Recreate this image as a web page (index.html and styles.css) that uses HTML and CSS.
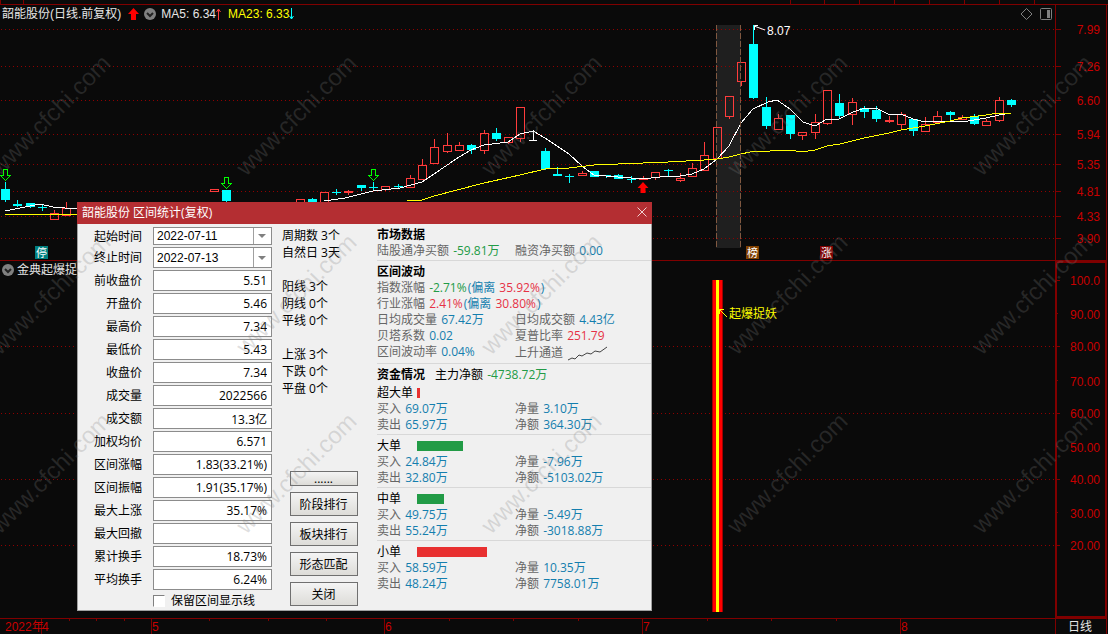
FILE: index.html
```html
<!DOCTYPE html>
<html lang="zh-CN">
<head>
  <meta charset="UTF-8">
  <meta name="viewport" content="width=device-width, initial-scale=1.0">
  <title>韶能股份 区间统计</title>
  <link rel="stylesheet" href="styles.css">
</head>
<body>
  <div class="terminal">
    <svg class="strip" aria-hidden="true">
      <path class="frame" d="M0 4.5H2000M.5 0V4M23.5 0V4M790.5 0V4M824.5 0V4M859.5 0V4M894.5 0V4M929.5 0V4M964.5 0V4M999.5 0V4M1034.5 0V4"/>
    </svg>

    <section class="pane price-pane">
      <div class="plot">
        <header class="pane-head">
          <span>韶能股份(日线.前复权)</span>
          <svg class="up-icon" width="11" height="12"><path d="M5.5 0L11 6H8V12H3V6H0Z"/></svg>
          <svg class="fold-icon" width="12" height="12"><circle cx="6" cy="6" r="6"/><path d="M3 5L6 8L9 5"/></svg>
          <span class="ma5">MA5: 6.34<svg class="trend" width="5" height="12"><path d="M2.5 12V1M.5 4L2.5 1L4.5 4"/></svg></span>
          <span class="ma23">MA23: 6.33<svg class="trend" width="5" height="12"><path d="M2.5 0V11M.5 8L2.5 11L4.5 8"/></svg></span>
          <svg class="tools" width="32" height="12">
            <path d="M5.500 .5L11 6L5.500 11.500L0 6Z"/>
            <rect x="19.500" y=".5" width="11" height="11" rx="1"/>
            <rect class="solid" x="26" y="2" width="3" height="8"/>
          </svg>
        </header>
        <svg class="chart" height="235">
          <g transform="translate(0 -25)">
            <rect class="range" x="716" y="25" width="25" height="223"/>
            <g class="grid">
              <line x1="1" x2="100%" y1="29.500" y2="29.500"/>
              <line x1="1" x2="100%" y1="66.500" y2="66.500"/>
              <line x1="1" x2="100%" y1="100.500" y2="100.500"/>
              <line x1="1" x2="100%" y1="134.500" y2="134.500"/>
              <line x1="1" x2="100%" y1="164.500" y2="164.500"/>
              <line x1="1" x2="100%" y1="191.500" y2="191.500"/>
              <line x1="1" x2="100%" y1="216.500" y2="216.500"/>
              <line x1="1" x2="100%" y1="238.500" y2="238.500"/>
            </g>
            <!-- falling days -->
            <path class="down-wick" d="M5.500 182V202M17.500 200V207M30.500 203V208M42.500 205V211M226.500 190V202M312.500 198V202M336.500 189V195M361.500 185V191M373.500 182V190M398.500 184V189M471.500 144V154M496.500 128V141M545.500 148V170M557.500 167V176M569.500 174V183M606.500 175V178M618.500 174V179M631.500 176V183M668.500 169V176M753.500 25V99M766.500 97V129M790.500 115V139M839.500 94V119M864.500 106V118M876.500 106V122M913.500 119V136M950.500 111V120M974.500 114V125M1011.500 99V107"/>
            <path class="down-body" d="M1 189h9v11h-9zM13 204h9v2h-9zM26 203h9v4h-9zM38 207h9v1h-9zM222 190h9v11h-9zM308 199h9v3h-9zM332 192h9v1h-9zM357 185h9v3h-9zM369 187h9v1h-9zM394 186h9v1h-9zM467 145h9v5h-9zM492 133h9v6h-9zM541 151h9v18h-9zM553 174h9v2h-9zM565 176h9v1h-9zM590 171h9v6h-9zM602 175h9v1h-9zM614 175h9v4h-9zM627 179h9v1h-9zM664 170h9v1h-9zM749 44h9v54h-9zM762 107h9v19h-9zM786 115h9v19h-9zM835 103h9v13h-9zM860 108h9v4h-9zM872 110h9v9h-9zM909 119h9v12h-9zM946 112h9v3h-9zM970 116h9v8h-9zM1007 100h9v5h-9z"/>
            <!-- rising days -->
            <path class="up" d="M50.500 213.500h8v6h-8zM54.500 210V213M62.500 208.500h8v7h-8zM66.500 202V208M210.500 189.500h8v2h-8zM296.500 199.500h8v6h-8zM320.500 192.500h8v10h-8zM344.500 191.500h8v1h-8zM348.500 190V195M381.500 186.500h8v3h-8zM385.500 190V191M406.500 178.500h8v9h-8zM410.500 175V178M418.500 165.500h8v14h-8zM422.500 159V165M430.500 147.500h8v16h-8zM434.500 139V147M443.500 145.500h8v6h-8zM447.500 133V145M447.500 152V153M455.500 145.500h8v5h-8zM459.500 142V145M480.500 133.500h8v17h-8zM484.500 130V133M484.500 151V154M504.500 137.500h8v5h-8zM508.500 143V144M516.500 107.500h8v31h-8zM520.500 139V142M578.500 173.500h8v2h-8zM582.500 171V173M639.500 178.500h8v1h-8zM643.500 176V178M651.500 172.500h8v5h-8zM655.500 178V180M676.500 178.500h8v2h-8zM680.500 173V178M680.500 181V182M688.500 168.500h8v8h-8zM692.500 163V168M700.500 155.500h8v15h-8zM704.500 142V155M713.500 127.500h8v31h-8zM725.500 96.500h8v20h-8zM729.500 117V119M737.500 62.500h8v19h-8zM741.500 82V86M774.500 118.500h8v11h-8zM778.500 114V118M798.500 132.500h8v3h-8zM802.500 136V140M811.500 122.500h8v10h-8zM815.500 114V122M815.500 133V139M823.500 90.500h8v33h-8zM827.500 124V125M848.500 102.500h8v12h-8zM852.500 98V102M852.500 115V125M885.500 120.500h8v1h-8zM889.500 116V123M897.500 114.500h8v10h-8zM901.500 112V114M901.500 125V129M921.500 124.500h8v7h-8zM925.500 117V124M933.500 116.500h8v6h-8zM937.500 111V116M958.500 117.500h8v2h-8zM962.500 115V117M982.500 121.500h8v4h-8zM986.500 119V121M995.500 100.500h8v20h-8zM999.500 97V100M999.500 121V122"/>
            <path class="flat" d="M533.500 130V140M529 140.500H537"/>
            <path class="ma-short" d="M5 211L20 208L40 204L53 207L77 209M324 201L345 198L361 194L373 191L400 188L422 182L434 174L459 157L471 150L484 145L508 142L520 134L533 131L545 138L569 154L582 166L594 175L618 177L643 179L668 176L680 176L692 174L704 169L717 159L729 146L741 123L753 109L768 102L777 100L790 109L803 122L815 126L827 119L839 119L853 112L865 108L876 108L888 114L901 114L913 119L925 122L938 121L962 122L986 118L999 115L1011 113"/>
            <path class="ma-long" d="M5 214L50 214L77 215M407 201L422 200L434 196L484 183L520 175L545 169L569 168L594 165L643 163L668 162L704 160L717 159L729 157L741 154L750 152L790 150L802 152L815 150L827 146L840 144L864 138L889 133L901 130L925 126L950 121L962 118L986 115L999 113L1011 114"/>
            <path class="range-edge" d="M716.500 25V248M740.500 25V248"/>
            <path class="sell" d="M3.500 169.500h4v6h3L5.500 180.500L.5 175.500h3z"/>
            <path class="sell" d="M224.500 177.500h4v6h3L226.500 188.500L221.500 183.500h3z"/>
            <path class="sell" d="M371.500 169.500h4v6h3L373.500 180.500L368.500 175.500h3z"/>
            <path class="buy" d="M643 182L648.500 188H645.500V193H640.500V188H637.500Z"/>
            <path class="flat" d="M765 30L754 26M754.500 30V25.500H758"/>
            <text class="peak" x="767" y="35">8.07</text>
            <rect class="tag-halt" x="35" y="246" width="13" height="13"/>
            <text class="tag" x="36" y="257">停</text>
            <rect class="tag-list" x="746" y="246" width="13" height="13"/>
            <text class="tag" x="747" y="257">榜</text>
            <rect class="tag-rise" x="820" y="246" width="13" height="13"/>
            <text class="tag" x="821" y="257">涨</text>
          </g>
        </svg>
      </div>
      <svg class="axis price-axis">
        <g transform="translate(0 -5)">
          <path class="frame" d="M0 29.500H5M0 66.500H5M0 100.500H5M0 134.500H5M0 164.500H5M0 191.500H5M0 216.500H5M0 238.500H5"/>
          <text x="44" y="34">7.99</text>
          <text x="44" y="71">7.26</text>
          <text x="44" y="105">6.60</text>
          <text x="44" y="139">5.94</text>
          <text x="44" y="169">5.35</text>
          <text x="44" y="196">4.81</text>
          <text x="44" y="221">4.33</text>
          <text x="44" y="243">3.90</text>
        </g>
      </svg>
    </section>

    <section class="pane signal-pane">
      <div class="plot">
        <header class="pane-head small">
          <svg class="fold-icon" width="12" height="12"><circle cx="6" cy="6" r="6"/><path d="M3 5L6 8L9 5"/></svg>
          <span>金典起爆捉妖</span>
        </header>
        <svg class="chart" height="340">
          <g transform="translate(0 -278)">
            <g class="grid">
              <line x1="1" x2="100%" y1="346.500" y2="346.500"/>
              <line x1="1" x2="100%" y1="413.500" y2="413.500"/>
              <line x1="1" x2="100%" y1="479.500" y2="479.500"/>
              <line x1="1" x2="100%" y1="545.500" y2="545.500"/>
            </g>
            <rect class="bar-edge" x="712" y="280" width="11" height="332"/>
            <rect class="bar-mid" x="713" y="280" width="9" height="332"/>
            <rect class="bar-core" x="716" y="280" width="3" height="332"/>
            <path class="pointer" d="M727 317L719.500 309.500M719.500 314V309.500H724"/>
            <text class="signal" x="729" y="318">起爆捉妖</text>
          </g>
        </svg>
      </div>
      <svg class="axis signal-axis">
        <g transform="translate(-2 -263)">
          <path class="frame" d="M0 280.500H5M0 313.500H3M0 346.500H5M0 380.500H3M0 413.500H5M0 446.500H3M0 479.500H5M0 512.500H3M0 545.500H5"/>
          <text x="45" y="285">100.0</text>
          <text x="45" y="319">90.00</text>
          <text x="45" y="351">80.00</text>
          <text x="45" y="386">70.00</text>
          <text x="45" y="418">60.00</text>
          <text x="45" y="452">50.00</text>
          <text x="45" y="484">40.00</text>
          <text x="45" y="518">30.00</text>
          <text x="45" y="550">20.00</text>
        </g>
      </svg>
    </section>

    <footer class="time-row">
      <svg class="timeline" height="15">
        <path class="frame" d="M41.500 0V15M69.500 0V2M96.500 0V2M124.500 0V2M151.500 0V15M209.500 0V2M268.500 0V2M326.500 0V2M384.500 0V15M449.500 0V2M513.500 0V2M578.500 0V2M642.500 0V15M707.500 0V2M771.500 0V2M836.500 0V2M900.500 0V15"/>
        <text x="5" y="12">2022年</text>
        <text x="42" y="12">4</text>
        <text x="152" y="12">5</text>
        <text x="385" y="12">6</text>
        <text x="643" y="12">7</text>
        <text x="901" y="12">8</text>
      </svg>
      <span class="period">日线</span>
    </footer>

    <section class="dialog" role="dialog" aria-labelledby="dialogTitle">
      <header class="dialog-head">
        <span id="dialogTitle">韶能股份 区间统计(复权)</span>
        <button class="close" type="button" aria-label="关闭窗口">
          <svg width="10" height="10"><path d="M.5 .5L9.500 9.500M9.500 .5L.5 9.500"/></svg>
        </button>
      </header>
      <div class="dialog-body">
        <form class="fields">
          <label for="start">起始时间</label>
          <div class="combo first"><select id="start"><option>2022-07-11</option></select></div>
          <label for="end">终止时间</label>
          <div class="combo"><select id="end"><option>2022-07-13</option></select></div>
          <label for="prev">前收盘价</label><input id="prev" type="text" value="5.51">
          <label for="open">开盘价</label><input id="open" type="text" value="5.46">
          <label for="high">最高价</label><input id="high" type="text" value="7.34">
          <label for="low">最低价</label><input id="low" type="text" value="5.43">
          <label for="last">收盘价</label><input id="last" type="text" value="7.34">
          <label for="volume">成交量</label><input id="volume" type="text" value="2022566">
          <label for="amount">成交额</label><input id="amount" type="text" value="13.3亿">
          <label for="average">加权均价</label><input id="average" type="text" value="6.571">
          <label for="change">区间涨幅</label><input id="change" type="text" value="1.83(33.21%)">
          <label for="swing">区间振幅</label><input id="swing" type="text" value="1.91(35.17%)">
          <label for="maxUp">最大上涨</label><input id="maxUp" type="text" value="35.17%">
          <label for="maxDown">最大回撤</label><input id="maxDown" type="text" value="">
          <label for="turnover">累计换手</label><input id="turnover" type="text" value="18.73%">
          <label for="avgTurnover">平均换手</label><input id="avgTurnover" type="text" value="6.24%">
          <label class="keep"><input type="checkbox">保留区间显示线</label>
        </form>

        <div class="middle">
          <p>周期数 3个<br>自然日 3天</p>
          <p>阳线 3个<br>阴线 0个<br>平线 0个</p>
          <p>上涨 3个<br>下跌 0个<br>平盘 0个</p>
          <div class="actions">
            <button class="short" type="button">......</button>
            <button type="button">阶段排行</button>
            <button type="button">板块排行</button>
            <button type="button">形态匹配</button>
            <button type="button">关闭</button>
          </div>
        </div>

        <div class="stats">
          <section>
            <h2>市场数据</h2>
            <div class="pair">
              <span>陆股通净买额 <b class="green">-59.81万</b></span>
              <span>融资净买额 <b>0.00</b></span>
            </div>
          </section>
          <section>
            <h2>区间波动</h2>
            <div>指数涨幅 <b class="green">-2.71%</b><b>(偏离 </b><b class="red">35.92%</b><b>)</b></div>
            <div>行业涨幅 <b class="red">2.41%</b><b>(偏离 </b><b class="red">30.80%</b><b>)</b></div>
            <div class="pair"><span>日均成交量 <b>67.42万</b></span><span>日均成交额 <b>4.43亿</b></span></div>
            <div class="pair"><span>贝塔系数 <b>0.02</b></span><span>夏普比率 <b class="red">251.79</b></span></div>
            <div class="pair channel">
              <span>区间波动率 <b>0.04%</b></span>
              <span class="trend-cell">上升通道
                <svg width="42" height="15"><path d="M1 14L5 12L8 13L12 9L15 10L20 7L24 8L28 5L33 6L40 1"/></svg>
              </span>
            </div>
          </section>
          <section>
            <div class="fund"><h2>资金情况</h2><span class="dark">主力净额 <b class="green">-4738.72万</b></span></div>
            <div class="order"><span>超大单</span><i class="bar buy-bar" style="width: 3px"></i></div>
            <div class="pair"><span>买入 <b>69.07万</b></span><span>净量 <b>3.10万</b></span></div>
            <div class="pair"><span>卖出 <b>65.97万</b></span><span>净额 <b>364.30万</b></span></div>
          </section>
          <section>
            <div class="order"><span>大单</span><i class="bar sell-bar" style="width: 46px"></i></div>
            <div class="pair"><span>买入 <b>24.84万</b></span><span>净量 <b>-7.96万</b></span></div>
            <div class="pair"><span>卖出 <b>32.80万</b></span><span>净额 <b>-5103.02万</b></span></div>
          </section>
          <section>
            <div class="order"><span>中单</span><i class="bar sell-bar" style="width: 27px"></i></div>
            <div class="pair"><span>买入 <b>49.75万</b></span><span>净量 <b>-5.49万</b></span></div>
            <div class="pair"><span>卖出 <b>55.24万</b></span><span>净额 <b>-3018.88万</b></span></div>
          </section>
          <section>
            <div class="order"><span>小单</span><i class="bar buy-bar" style="width: 70px"></i></div>
            <div class="pair"><span>买入 <b>58.59万</b></span><span>净量 <b>10.35万</b></span></div>
            <div class="pair"><span>卖出 <b>48.24万</b></span><span>净额 <b>7758.01万</b></span></div>
          </section>
        </div>
      </div>
    </section>

    <svg class="watermark" aria-hidden="true">
      <text transform="translate(0 177) rotate(-45)">www.cfchi.com</text>
      <text transform="translate(246 177) rotate(-45)">www.cfchi.com</text>
      <text transform="translate(491 177) rotate(-45)">www.cfchi.com</text>
      <text transform="translate(737 177) rotate(-45)">www.cfchi.com</text>
      <text transform="translate(982 177) rotate(-45)">www.cfchi.com</text>
      <text transform="translate(0 356) rotate(-45)">www.cfchi.com</text>
      <text transform="translate(246 356) rotate(-45)">www.cfchi.com</text>
      <text transform="translate(491 356) rotate(-45)">www.cfchi.com</text>
      <text transform="translate(737 356) rotate(-45)">www.cfchi.com</text>
      <text transform="translate(982 356) rotate(-45)">www.cfchi.com</text>
      <text transform="translate(0 535) rotate(-45)">www.cfchi.com</text>
      <text transform="translate(246 535) rotate(-45)">www.cfchi.com</text>
      <text transform="translate(491 535) rotate(-45)">www.cfchi.com</text>
      <text transform="translate(737 535) rotate(-45)">www.cfchi.com</text>
      <text transform="translate(982 535) rotate(-45)">www.cfchi.com</text>
    </svg>
  </div>
</body>
</html>
```
FILE: styles.css
```css
* {
  box-sizing: border-box;
}
body {
  margin: 0;
  background: #0a0a0a;
  font-family: "Liberation Sans", "Noto Sans CJK SC", sans-serif;
  font-size: 12px;
  color: #e6e6e6;
}
svg {
  display: block;
  flex: none;
}

/* chart terminal */
.terminal {
  position: relative;
  display: flex;
  flex-direction: column;
  min-height: 100vh;
  overflow: hidden;
}
.strip {
  width: 100%;
  height: 5px;
}
.frame {
  fill: none;
  stroke: #800000;
  shape-rendering: crispEdges;
}
.pane {
  display: grid;
  grid-template-columns: 1fr 52px;
  margin-right: 1px;
  border-bottom: 1px solid #800000;
}
.signal-pane {
  flex: 1;
}
.plot {
  min-width: 0;
}
.pane-head {
  display: flex;
  align-items: center;
  gap: 5px;
  height: 20px;
  padding: 0 2px 2px;
  line-height: 18px;
  white-space: nowrap;
}
.pane-head.small {
  height: 17px;
  padding-bottom: 0;
  gap: 3px;
}
.up-icon {
  margin-left: 2px;
  fill: #f00;
}
.fold-icon circle {
  fill: #808080;
}
.fold-icon path {
  fill: none;
  stroke: #222;
  stroke-width: 2;
}
.ma5,
.ma23 {
  display: flex;
  align-items: center;
}
.ma5 {
  margin-right: 2px;
}
.ma23 {
  color: #ff0;
}
.trend {
  fill: none;
}
.ma5 .trend {
  stroke: #ff3c3c;
}
.ma23 .trend {
  stroke: #0ff;
}
.tools {
  margin-left: auto;
  fill: none;
  stroke: #808080;
}
.tools .solid {
  fill: #808080;
  stroke: none;
}
.chart {
  width: 100%;
}
.grid line {
  stroke: #900000;
  stroke-dasharray: 1 3;
  shape-rendering: crispEdges;
}
.range {
  fill: #1f1f1f;
}
.range-edge {
  stroke: #805840;
  stroke-dasharray: 6 2;
}
.down-wick {
  stroke: #0ff;
}
.down-body {
  fill: #0ff;
}
.up {
  fill: none;
  stroke: #ff3c3c;
}
.flat,
.ma-short {
  fill: none;
  stroke: #fff;
}
.ma-long {
  fill: none;
  stroke: #ff0;
}
.ma-short,
.ma-long,
.down-wick,
.down-body,
.up,
.sell {
  shape-rendering: crispEdges;
}
.sell {
  fill: none;
  stroke: #0f0;
}
.buy {
  fill: #f00;
}
.peak,
.tag {
  fill: #fff;
}
.tag {
  font-size: 11px;
}
.tag-halt {
  fill: #008080;
}
.tag-list {
  fill: #804000;
}
.tag-rise {
  fill: #800000;
}
.axis {
  width: 52px;
  height: 100%;
  border-left: 1px solid #800000;
  border-right: 1px solid #800000;
}
.signal-axis {
  border: 2px solid #800000;
}
.axis text {
  fill: #c80000;
  text-anchor: end;
}
.bar-edge {
  fill: #a00000;
}
.bar-mid {
  fill: #f00;
}
.bar-core {
  fill: #ff0;
}
.pointer {
  fill: none;
  stroke: #ff0;
}
.signal {
  fill: #ff0;
}
.time-row {
  display: grid;
  grid-template-columns: 1fr 52px;
  height: 15px;
  margin-right: 1px;
}
.timeline {
  width: 100%;
}
.timeline text {
  fill: #c80000;
}
.period {
  padding-left: 12px;
  border-left: 1px solid #800000;
  border-right: 1px solid #800000;
  line-height: 16px;
}

/* interval statistics window */
.dialog {
  position: absolute;
  left: 77px;
  top: 202px;
  width: 575px;
  border: 1px solid #a0a0a0;
  border-top: 0;
  background: #f0f0f0;
  color: #000;
  font-family: "Open Sans", "Noto Sans CJK SC", sans-serif;
}
.dialog-head {
  display: flex;
  align-items: center;
  justify-content: space-between;
  height: 22px;
  margin: 0 -1px;
  padding: 0 5px 2px;
  background: #b42e32;
  color: #fff;
}
.close {
  padding: 0;
  border: 0;
  background: none;
}
.close path {
  stroke: #f0d0d0;
}
.dialog-body {
  display: flex;
  gap: 10px;
}
.fields {
  display: grid;
  grid-template-columns: 64px 119px;
  column-gap: 11px;
  row-gap: 2px;
  padding: 3px 0 1px;
  line-height: 17px;
}
.fields > label {
  align-self: center;
  text-align: right;
}
.fields input[type="text"] {
  width: 100%;
  height: 21px;
  padding: 0 4px;
  border: 1px solid #8c8c8c;
  border-radius: 0;
  background: #fff;
  font: inherit;
  text-align: right;
}
.combo {
  position: relative;
  height: 21px;
  border: 1px solid #8c8c8c;
  background: #fff;
}
.combo.first {
  height: 18px;
}
.combo select {
  display: block;
  width: 100%;
  height: 100%;
  padding: 0 20px 0 3px;
  border: 0;
  background: none;
  appearance: none;
  color: #000;
  font: 12px "Liberation Sans", sans-serif;
}
.combo::before {
  content: "";
  position: absolute;
  top: 0;
  bottom: 0;
  right: 17px;
  border-left: 1px solid #a0a0a0;
}
.combo::after {
  content: "";
  position: absolute;
  top: 50%;
  right: 5px;
  margin-top: -2px;
  border: 4px solid transparent;
  border-top-color: #808080;
  border-bottom: 0;
  pointer-events: none;
}
.fields .keep {
  grid-column: 2;
  display: flex;
  align-items: center;
  gap: 6px;
  white-space: nowrap;
}
.keep input {
  width: 12px;
  height: 12px;
  margin: 0;
  border: 1px solid #fff;
  border-top-color: #808080;
  border-left-color: #808080;
  background: #fff;
  appearance: none;
}
.middle {
  display: flex;
  flex-direction: column;
  gap: 17px;
  width: 85px;
  padding: 3px 2px 4px 0;
  line-height: 17px;
  white-space: nowrap;
}
.middle p {
  margin: 0;
}
.actions {
  display: flex;
  flex-direction: column;
  align-items: center;
  gap: 6px;
  margin-top: auto;
}
.actions button {
  width: 68px;
  height: 24px;
  padding: 0;
  border: 1px solid #707070;
  border-radius: 0;
  background: linear-gradient(#f4f4f4, #dddcd8);
  color: #000;
  font: inherit;
}
.actions .short {
  height: 15px;
  line-height: 12px;
}
.stats {
  flex: 1;
  color: #666;
  line-height: 16px;
  white-space: nowrap;
}
.stats section {
  padding: 3px 0 1px;
  border-bottom: 1px solid #d8d8d8;
}
.stats section:last-child {
  border-bottom: 0;
}
.stats h2 {
  margin: 0;
  color: #000;
  font-size: 12px;
  font-weight: bold;
}
.stats b {
  margin-left: 1px;
  color: #147eae;
  font-weight: normal;
}
.stats .green {
  color: #229b46;
}
.stats .red {
  color: #e63246;
}
.pair {
  display: grid;
  grid-template-columns: 138px 1fr;
}
.channel {
  height: 18px;
}
.trend-cell {
  display: flex;
  align-items: center;
  gap: 4px;
}
.trend-cell path {
  fill: none;
  stroke: #444;
}
.fund {
  display: flex;
  gap: 10px;
  height: 18px;
}
.fund .dark {
  color: #000;
}
.order {
  display: grid;
  grid-template-columns: 40px 1fr;
  align-items: center;
  color: #000;
}
.bar {
  height: 10px;
}
.buy-bar {
  background: #e83030;
}
.sell-bar {
  background: #229b46;
}

.watermark {
  position: absolute;
  top: 0;
  left: 0;
  width: 100%;
  height: 100%;
  pointer-events: none;
}
.watermark text {
  fill: #808080;
  fill-opacity: .25;
  font-size: 24px;
}
```
